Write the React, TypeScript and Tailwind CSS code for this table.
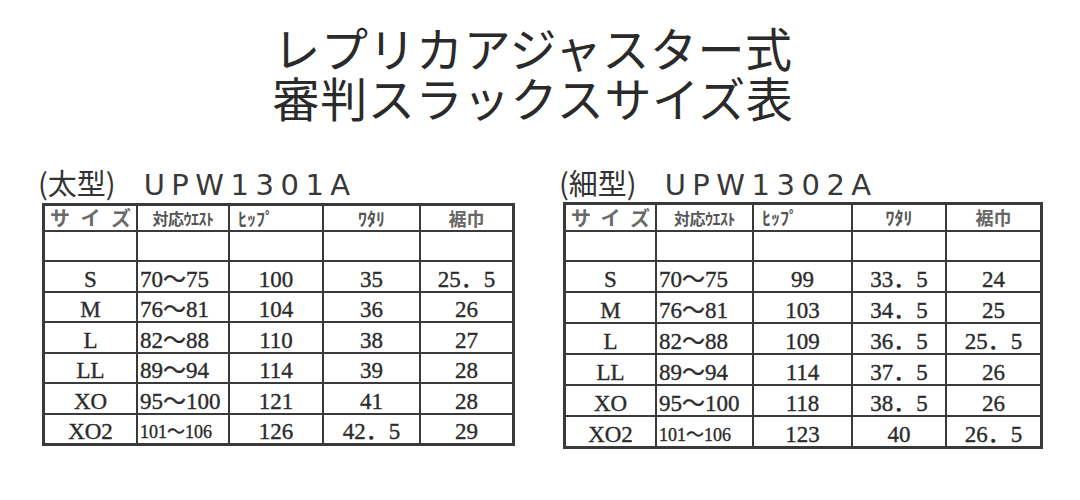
type Row = { size: string; waist: string; hip: string; watari: string; suso: string };

const futo: Row[] = [
  { size: "S", waist: "70～75", hip: "100", watari: "35", suso: "25．5" },
  { size: "M", waist: "76～81", hip: "104", watari: "36", suso: "26" },
  { size: "L", waist: "82～88", hip: "110", watari: "38", suso: "27" },
  { size: "LL", waist: "89～94", hip: "114", watari: "39", suso: "28" },
  { size: "XO", waist: "95～100", hip: "121", watari: "41", suso: "28" },
  { size: "XO2", waist: "101～106", hip: "126", watari: "42．5", suso: "29" },
];

const hoso: Row[] = [
  { size: "S", waist: "70～75", hip: "99", watari: "33．5", suso: "24" },
  { size: "M", waist: "76～81", hip: "103", watari: "34．5", suso: "25" },
  { size: "L", waist: "82～88", hip: "109", watari: "36．5", suso: "25．5" },
  { size: "LL", waist: "89～94", hip: "114", watari: "37．5", suso: "26" },
  { size: "XO", waist: "95～100", hip: "118", watari: "38．5", suso: "26" },
  { size: "XO2", waist: "101～106", hip: "123", watari: "40", suso: "26．5" },
];

const base =
  "bg-white flex items-end leading-none whitespace-nowrap text-[#2b2b2b] [-webkit-text-stroke:0.35px_#2b2b2b] font-['Liberation_Serif','Noto_Sans_CJK_JP',serif]";
const cell = base + " justify-center text-[23px]";
const head = "bg-white flex items-center font-bold font-['Noto_Sans_CJK_JP',sans-serif]";

function SizeTable({ title, rows, wide }: { title: string; rows: Row[]; wide: boolean }) {
  return (
    <div className="flex flex-col">
      <div className="-ml-[4px] h-[44px] flex items-end pb-[3px]">
        <div className="leading-none whitespace-nowrap text-[29px] text-[#333] font-['Noto_Sans_CJK_JP',sans-serif]">
          <span>(</span>
          <span>{title}</span>
          <span className="mr-[28px]">)</span>
          <span className="tracking-[6.5px] font-['DejaVu_Sans',sans-serif] text-[#383838]">
            {wide ? "UPW1301A" : "UPW1302A"}
          </span>
        </div>
      </div>
      <div
        className={
          "grid gap-[2px] bg-[#3a3a3a] border-[3px] border-[#3a3a3a] " +
          (wide
            ? "grid-cols-[91px_90px_92px_95px_91px] grid-rows-[24px_28px_repeat(6,28.5px)]"
            : "-mt-[1px] grid-cols-[89px_95px_97px_92px_93px] grid-rows-[25px_28px_repeat(6,29px)]")
        }
      >
        <div className={head + " justify-between px-[5px] text-[20px] text-[#6a6a6a]"}>
          <span>サ</span>
          <span>イ</span>
          <span>ズ</span>
        </div>
        <div className={head + " justify-center text-[16px] text-[#555] tracking-[-0.5px]"}>対応ｳｴｽﾄ</div>
        <div className={head + " pl-[8px] text-[18px] text-[#555]"}>ﾋｯﾌﾟ</div>
        <div className={head + " justify-center text-[18px] text-[#555]"}>ﾜﾀﾘ</div>
        <div className={head + " justify-center text-[18px] text-[#666]"}>裾巾</div>
        <div className="bg-white" />
        <div className="bg-white" />
        <div className="bg-white" />
        <div className="bg-white" />
        <div className="bg-white" />
        {rows.map((r) => [
          <div key={r.size + "s"} className={cell}>{r.size}</div>,
          <div
            key={r.size + "w"}
            className={base + " justify-start pl-[2px] " + (r.size === "XO2" ? "text-[18px] pb-[2px]" : "text-[23px]")}
          >
            {r.waist}
          </div>,
          <div key={r.size + "h"} className={cell}>{r.hip}</div>,
          <div key={r.size + "t"} className={cell}>{r.watari}</div>,
          <div key={r.size + "u"} className={cell}>{r.suso}</div>,
        ])}
      </div>
    </div>
  );
}

export default function App() {
  return (
    <div className="w-[1080px] h-[500px] bg-white overflow-hidden">
      <div className="pt-[22px] flex flex-col items-center text-[47px] leading-[50px] text-[#2a2a2a] font-['Noto_Sans_CJK_JP',sans-serif]">
        <div className="pr-[14px] tracking-[0.6px]">レプリカアジャスター式</div>
        <div className="pr-[14px] tracking-[0.6px]">審判スラックスサイズ表</div>
      </div>
      <div className="flex items-start pl-[42px] gap-[48px] mt-[37px]">
        <SizeTable title="太型" rows={futo} wide={true} />
        <SizeTable title="細型" rows={hoso} wide={false} />
      </div>
    </div>
  );
}
